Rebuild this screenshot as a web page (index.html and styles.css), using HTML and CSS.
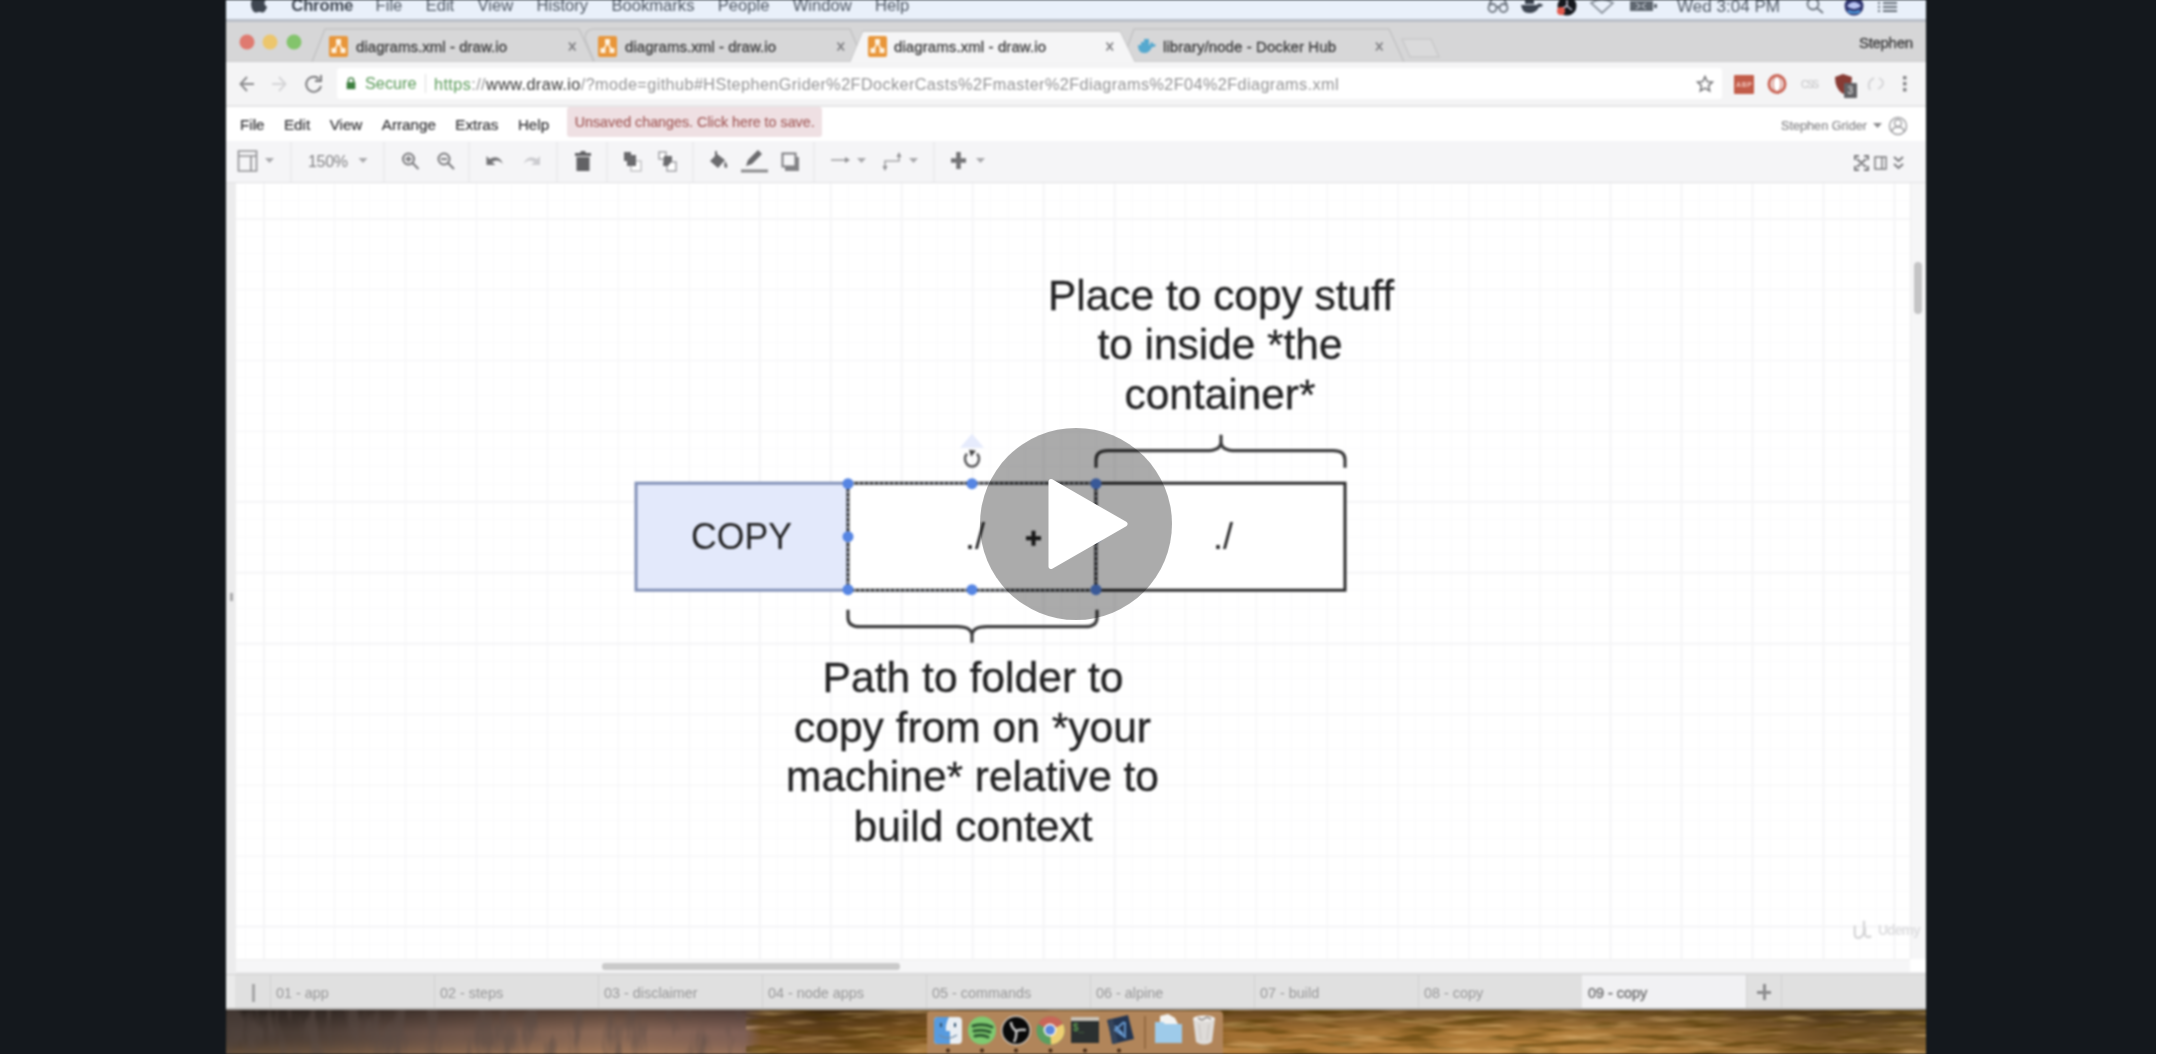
FILE: index.html
```html
<!DOCTYPE html>
<html lang="en">
<head>
<meta charset="utf-8">
<title>Lecture video</title>
<link rel="stylesheet" href="styles.css">
</head>
<body>
<main class="player">
<div class="video">
  <header class="macbar">
    <svg class="apple" width="18" height="22" viewBox="0 0 18 22"><path d="M12 1c0 2-1.500 4-3.500 4C8.300 3 10 1.200 12 1zM9 6.500c1-.3 2-1 3.500-1 1.500 0 3 .8 4 2-3 2-2.500 6 .6 7.300C16 18 14.500 20.500 13 20.500c-1.400 0-2-.8-3.700-.8-1.600 0-2.300.8-3.600.8C3 20.500 1 15.500 1 12c0-4 2.300-6.300 4.600-6.300 1.500 0 2.500.8 3.400.8z"/></svg>
    <b>Chrome</b><span>File</span><span>Edit</span><span>View</span><span>History</span><span>Bookmarks</span><span>People</span><span>Window</span><span>Help</span>
    <svg class="status" width="420" height="24" viewBox="1480 0 420 24">
      <g fill="none" stroke="#6b737d" stroke-width="1.800"><circle cx="1492.500" cy="8" r="4"/><circle cx="1503.500" cy="8" r="4"/><path d="M1489 5l3-6M1507 5l-3-6M1496 7h4"/></g>
      <path fill="#3c4450" d="M1521 5h16c1-2 3-2 6 0-1 2-3 2-4 2-2 4-5 6-10 6-5 0-7-3-8-8zM1525 0h9v4h-9z"/>
      <circle cx="1567" cy="6" r="9.500" fill="#15181d"/><path d="M1567 6v-6M1567 6l5 4M1567 6l-6 3" stroke="#ccd" stroke-width="1.500"/><circle cx="1561" cy="11" r="4" fill="#e25a4d"/>
      <path d="M1591 3q11-7 22 0l-11 10z" fill="none" stroke="#8a929c" stroke-width="1.800"/>
      <path d="M1630 1h23v10h-23zM1654 4h3v4h-3z" fill="#5f6770"/><path d="M1636 3l4 3-4 3M1646 3l-4 3 4 3" stroke="#dfe6ef" fill="none"/>
      <text x="1677" y="11.500" textLength="103" font-size="17" fill="#525b66">Wed 3:04 PM</text>
      <g fill="none" stroke="#6b737d" stroke-width="1.800"><circle cx="1813" cy="4" r="5.500"/><path d="M1817 8l6 5"/></g>
      <circle cx="1854" cy="6" r="9.500" fill="#30356f"/><path d="M1847 6q7-8 14 0-7 6-14 0z" fill="#b9c4f2"/><path d="M1848 11q6 3 12 0" stroke="#4ea4e8" stroke-width="2" fill="none"/>
      <path d="M1878 3h2m3 0h14M1878 7h2m3 0h14M1878 11h2m3 0h14" stroke="#646c76" stroke-width="2"/>
    </svg>
  </header>

  <div class="tabs">
    <svg class="tabshapes" width="1700" height="43" viewBox="226 19 1700 43">
      <circle cx="247" cy="42" r="7.500" fill="#df7a70"/><circle cx="270" cy="42" r="7.500" fill="#ecc66c"/><circle cx="294" cy="42" r="7.500" fill="#83c46c"/>
      <g fill="#d7d7d8" stroke="#c3c3c4" stroke-width="1.500"><path d="M312 62l13-33h254l15 33"/><path d="M594 61l-9-22q0-10 9-10h256l14 33"/><path d="M1122 62l12-33h255l15 33"/></g>
      <path d="M226 62h624l13-31h257l15 31h791" fill="none" stroke="#c3c3c4"/>
      <path d="M850 63l13-31h257l15 31z" fill="#f5f5f6"/>
      <path d="M1402 39h29l8 18h-29z" fill="#dadadb" stroke="#c9c9ca" stroke-width="1.500"/>
      <g id="fav"><rect x="329" y="36" width="19" height="21" rx="2" fill="#e8963a"/><path d="M338.500 43l-5 8M338.500 43l5 8" stroke="#fff4e2" stroke-width="1.500"/><path d="M336 39h5v5h-5zM331.500 48h5v5h-5zM340.500 48h5v5h-5z" fill="#fff4e2"/></g>
      <use href="#fav" x="269"/><use href="#fav" x="539"/>
      <path d="M1138 45h12c0-2 1-3 2-3 1 1 1 2 1 2 1 0 2 0 3 1-1 2-2 2-4 2-2 4-4 6-8 6-4 0-6-3-6-8zM1141 42h8v3h-8zM1144 39h5v3h-5z" fill="#56a9cf"/>
      <g stroke="#77777a" stroke-width="1.500"><path d="M569 42.500l6.500 8M575.500 42.500l-6.500 8M837.500 42.500l6.500 8M844 42.500l-6.500 8M1106.500 42.500l6.500 8M1113 42.500l-6.500 8M1376 42.500l6.500 8M1382.500 42.500l-6.500 8"/></g>
      <g font-size="15" fill="#3b3b3c" stroke="#3b3b3c" stroke-width=".3"><text x="356" y="51.500" textLength="151">diagrams.xml - draw.io</text><text x="625" y="51.500" textLength="151">diagrams.xml - draw.io</text><text x="894" y="51.500" textLength="152">diagrams.xml - draw.io</text><text x="1163" y="51.500" textLength="173">library/node - Docker Hub</text><text x="1859" y="48" textLength="54">Stephen</text></g>
    </svg>
  </div>

  <div class="addressbar">
    <svg class="nav" width="111" height="44" viewBox="226 62 111 44" fill="none" stroke-width="1.900"><path d="M254 84h-13m6-7l-6.500 7 6.500 7" stroke="#8a8a8c"/><path d="M272 84h13m-6-7l6.500 7-6.500 7" stroke="#d4d4d6"/><path d="M319 79a7.500 7.500 0 1 0 2 7M321 75v6h-6" stroke="#77777a"/></svg>
    <div class="field">
      <svg width="10" height="13" viewBox="0 0 10 15"><path d="M0 6h10v8H0z" fill="#3d7f3f"/><path d="M2 7V4q0-3 3-3t3 3v3" fill="none" stroke="#3d7f3f" stroke-width="1.700"/></svg>
      <span class="secure">Secure</span>
      <span class="url"><i>https</i>://<b>www.draw.io</b>/?mode=github#HStephenGrider%2FDockerCasts%2Fmaster%2Fdiagrams%2F04%2Fdiagrams.xml</span>
      <svg class="star" width="18" height="18" viewBox="0 0 18 18"><path d="M9 1.500l2.200 5 5.300.5-4 3.600 1.200 5.400L9 13.200 4.300 16l1.200-5.400-4-3.600 5.300-.5z" fill="none" stroke="#747477" stroke-width="1.500"/></svg>
    </div>
    <svg width="204" height="44" viewBox="1722 62 204 44"><rect x="1734" y="75" width="20" height="19" rx="1" fill="#c25c49"/><text x="1736" y="87" font-size="7" textLength="16" fill="#f1c4bb" font-weight="700">ABP</text><ellipse cx="1777" cy="84" rx="8" ry="8.500" fill="none" stroke="#ca6556" stroke-width="3"/><ellipse cx="1777" cy="84" rx="4" ry="7.500" fill="#fff" stroke="#ca6556"/><text x="1801" y="88" font-size="10" textLength="18" fill="#c0c0c2">CSS</text><path d="M1835 77l8-3 9 3q0 12-9 17-8-5-8-17z" fill="#873b34"/><rect x="1844" y="83" width="13" height="15" rx="1" fill="#626265"/><text x="1847.500" y="94" font-size="10" fill="#eee">3</text><path d="M1874 78q-8 4-4 12M1879 78q7 4 2 9l-3 2" fill="none" stroke="#d6d6d8" stroke-width="2"/><path d="M1903 76h3.500v3.500h-3.500zM1903 82h3.500v3.500h-3.500zM1903 88h3.500v3.500h-3.500z" fill="#858588"/></svg>
  </div>

  <div class="menubar"><span>File</span><span>Edit</span><span>View</span><span>Arrange</span><span>Extras</span><span>Help</span><div class="unsaved">Unsaved changes. Click here to save.</div><div class="user"><span>Stephen Grider</span><svg width="36" height="22" viewBox="1872 115 36 22"><path d="M1873 123h9l-4.500 5z" fill="#8a8a8c"/><g fill="none" stroke="#a0a0a3" stroke-width="1.500"><circle cx="1898" cy="126" r="8.500"/><circle cx="1898" cy="123" r="3.500"/><path d="M1892 132q0-5 6-5t6 5"/></g></svg></div></div>

  <div class="toolbar">
    <svg width="1700" height="41" viewBox="226 141 1700 41">
      <path d="M291 142v40M384 142v40M469 142v40M557 142v40M607 142v40M693 142v40M814 142v40M934 142v40" stroke="#e9e9ec" stroke-width="1.500"/>
      <g fill="#a8a8ab"><path d="M265 158h9l-4.500 5zM358.500 158h9l-4.500 5zM857 158h9l-4.500 5zM909 158h9l-4.500 5zM976 158h9l-4.500 5z"/></g>
      <g fill="none" stroke="#919194" stroke-width="1.700"><path d="M238.500 151h18v20h-18zM238.500 156h18M251 156v15"/></g>
      <text x="308" y="166.500" font-size="16" textLength="40" fill="#808083">150%</text>
      <g fill="none" stroke="#7b7b7e" stroke-width="2"><circle cx="408.500" cy="159" r="5.500"/><path d="M412.500 163l6 6M408.500 156v6M405.500 159h6"/><circle cx="444" cy="159" r="5.500"/><path d="M448 163l6 6M441 159h6"/></g>
      <path d="M486.500 156v9h9l-3.500-3q6-4 11 2-4-10-13.500-5z" fill="#747477"/><path d="M540 156v9h-9l3.500-3q-6-4-11 2 4-10 13.500-5z" fill="#ccccd0"/>
      <path d="M575 153h5l1-2h4l1 2h5v3h-16zM576.500 157h13v14h-13z" fill="#626265"/>
      <g><path d="M631 161h10v10h-10z" fill="#fff" stroke="#c2c2c5" stroke-width="1.500"/><path d="M624 152h7v3h5v11h-9v-5h-3z" fill="#6b6b6e"/><path d="M659 152h7v7h-7zM667 162h9v9h-9z" fill="#fff" stroke="#a2a2a6" stroke-width="1.500"/><path d="M664 156h8v5l-4 5h-5z" fill="#6b6b6e"/></g>
      <path d="M710 161l7-7 8 6-7 8zM715 151h2v7h-2zM725 161q4 6 1 7-3 0-1-7z" fill="#6b6b6e"/>
      <path d="M746 166l2-6 10-10 4 4-10 10z" fill="#6b6b6e"/><path d="M741 171h27" stroke="#8a8a8d" stroke-width="3"/>
      <path d="M785 157h14v14h-14z" fill="#858588"/><path d="M782.500 153.500h13v13h-13z" fill="#f5f5f7" stroke="#7e7e81" stroke-width="2"/>
      <g fill="none" stroke="#a6a6a9" stroke-width="1.700"><path d="M831 160h17"/><path d="M885 169v-8h14v-7"/></g><path d="M845 157l5 3-5 3zM882.500 166h5l-2.500 5zM896.500 157h5l-2.500-5z" fill="#8f8f92"/>
      <path d="M951 160.500h15M958.500 152v17" stroke="#737376" stroke-width="4.500"/>
      <g fill="none" stroke="#7b7b7e" stroke-width="2"><path d="M1855 160v-4h4M1864 156h4v4M1868 166v4h-4M1859 170h-4v-4M1857 159l9 8M1866 159l-9 8"/><path d="M1875 157h11v12h-11zM1882 157v12" stroke-width="1.500"/><path d="M1894 157l4.500 4 4.500-4M1894 164l4.500 4 4.500-4"/></g>
    </svg>
  </div>

  <section class="editor">
    <div class="rail"><i></i></div>
    <div class="canvas">
      <svg width="1674" height="776" viewBox="236 182.300 1674 776">
        <rect x="636" y="482.500" width="212" height="107" fill="#e3e9fb" stroke="#8392b8" stroke-width="3"/>
        <rect x="848" y="482.500" width="248" height="107" fill="#fff" stroke="#333" stroke-width="3"/>
        <rect x="1096" y="482.500" width="249" height="107" fill="#fff" stroke="#2c2c2d" stroke-width="3"/>
        <rect x="848" y="482.500" width="248" height="107" fill="none" stroke="#9da5b5" stroke-width="2" stroke-dasharray="2 3"/>
        <g fill="none" stroke="#3d3d3e" stroke-width="3.200"><path d="M1096 467v-8q0-9 12-9h98q15 0 15-9v-7 7q0 9 15 9h97q12 0 12 9v8"/><path d="M848 609v8q0 9 12 9h97q15 0 15 9v7-7q0-9 15-9h98q12 0 12-9v-8"/></g>
        <path d="M972 433l12 14h-24z" fill="#e6ebfc"/>
        <path d="M967 453a7 7.500 0 1 0 10 0" fill="none" stroke="#59595b" stroke-width="2.500"/><path d="M969 449l7 1-5 6z" fill="#444"/>
        <g fill="#5685e3"><circle cx="848" cy="483" r="5.500"/><circle cx="972" cy="483" r="5.500"/><circle cx="1096" cy="483" r="5.500"/><circle cx="848" cy="536" r="5.500"/><circle cx="1096" cy="536" r="5.500"/><circle cx="848" cy="589" r="5.500"/><circle cx="972" cy="589" r="5.500"/><circle cx="1096" cy="589" r="5.500"/></g>
        <path d="M1026 537.500h15M1033.500 530v15" stroke="#222" stroke-width="4"/>
        <g fill="#222223" text-anchor="middle" font-size="36" lengthAdjust="spacingAndGlyphs"><text x="741.500" y="548" textLength="101" lengthAdjust="spacingAndGlyphs">COPY</text><text x="975" y="548">./</text><text x="1223" y="548">./</text></g>
        <g fill="#222223" stroke="#222223" stroke-width=".3" text-anchor="middle" font-size="42.300"><text x="1221" y="309" textLength="346" lengthAdjust="spacingAndGlyphs">Place to copy stuff</text><text x="1220" y="358.500" textLength="245" lengthAdjust="spacingAndGlyphs">to inside *the</text><text x="1220" y="408" textLength="191" lengthAdjust="spacingAndGlyphs">container*</text><text x="973" y="691.300" textLength="301" lengthAdjust="spacingAndGlyphs">Path to folder to</text><text x="972.500" y="741" textLength="357" lengthAdjust="spacingAndGlyphs">copy from on *your</text><text x="972.500" y="790.500" textLength="373" lengthAdjust="spacingAndGlyphs">machine* relative to</text><text x="973" y="840" textLength="239" lengthAdjust="spacingAndGlyphs">build context</text></g>
      </svg>
    </div>
    <div class="vscroll"><i></i></div>
    <div class="hscroll"><i></i></div>
    <div class="corner"></div>
    <div class="watermark"><svg width="24" height="26" viewBox="0 0 26 26"><path d="M3 8v9q0 6 6 4 4-2 4-8V3M14 10v7q0 5 7 3" fill="none" stroke="#d6d6d8" stroke-width="2.500"/></svg><span>Udemy</span></div>
  </section>

  <nav class="pages"><div class="grip"><i></i></div><span>01 - app</span><span>02 - steps</span><span>03 - disclaimer</span><span>04 - node apps</span><span>05 - commands</span><span>06 - alpine</span><span>07 - build</span><span>08 - copy</span><span class="active">09 - copy</span><div class="add"></div></nav>

  <footer class="desktop">
    <svg class="wall" width="1700" height="45" viewBox="0 0 1700 45" preserveAspectRatio="none">
      <defs>
        <linearGradient id="wood"><stop offset="0" stop-color="#463a33"/><stop offset=".06" stop-color="#54443c"/><stop offset=".12" stop-color="#70574c"/><stop offset=".22" stop-color="#94705c"/><stop offset=".305" stop-color="#86655b"/><stop offset=".315" stop-color="#80582c"/><stop offset=".35" stop-color="#6a471d"/><stop offset=".41" stop-color="#8f6026"/><stop offset=".6" stop-color="#ab7635"/><stop offset=".78" stop-color="#bd8740"/><stop offset=".88" stop-color="#9d7035"/><stop offset=".94" stop-color="#755327"/><stop offset="1" stop-color="#7d5d2e"/></linearGradient>
        <linearGradient id="shade" x2="0" y2="1"><stop offset="0" stop-color="#000" stop-opacity=".42"/><stop offset=".5" stop-color="#000" stop-opacity=".05"/><stop offset="1" stop-color="#ffb65a" stop-opacity=".2"/></linearGradient>
        <filter id="grain" x="0" y="0" width="1" height="1"><feTurbulence type="fractalNoise" baseFrequency=".018 .16" numOctaves="3" seed="8"/><feColorMatrix values="0 0 0 0 .08  0 0 0 0 .04  0 0 0 0 0  3.800 0 0 0 -1.750"/></filter>
        <filter id="glint" x="0" y="0" width="1" height="1"><feTurbulence type="fractalNoise" baseFrequency=".018 .16" numOctaves="3" seed="21"/><feColorMatrix values="0 0 0 0 .9  0 0 0 0 .62  0 0 0 0 .28  3 0 0 0 -1.500"/></filter>
        <filter id="bark" x="0" y="0" width="1" height="1"><feTurbulence type="fractalNoise" baseFrequency=".06 .02" numOctaves="3" seed="5"/><feColorMatrix values="0 0 0 0 .1  0 0 0 0 .07  0 0 0 0 .06  4 0 0 0 -1.900"/></filter>
      </defs>
      <rect width="1700" height="45" fill="url(#wood)"/><rect width="1700" height="45" fill="url(#shade)"/>
      <rect width="525" height="45" filter="url(#bark)" opacity=".5"/>
      <rect x="520" width="1180" height="45" filter="url(#grain)" opacity=".55"/><rect x="520" width="1180" height="45" filter="url(#glint)" opacity=".4"/>
    </svg>
    <svg class="dock" width="296" height="45" viewBox="927 1009 296 45">
      <path d="M927 1054v-40q0-4 4-4h288q4 0 4 4v40z" fill="#b1855a"/>
      <rect x="934" y="1016" width="28" height="27" rx="4" fill="#e9eef3"/><path d="M938 1016h11q-4 8-3 14h4v13h-12q-4 0-4-4v-19q0-4 4-4z" fill="#579bdf"/><path d="M941 1022v4M955 1022v4" stroke="#31536f" stroke-width="2"/><path d="M939 1034q9 6 18 0" stroke="#6f8ca6" stroke-width="1.500" fill="none"/>
      <circle cx="982" cy="1029.500" r="14" fill="#7fc970"/><g fill="none" stroke="#2f5e33" stroke-width="3"><path d="M973 1025q10-3 19 1M974 1030q9-2 16 1M975 1035q7-2 13 1" stroke-linecap="round"/></g>
      <circle cx="1016" cy="1029.500" r="15" fill="#c9c2ba"/><circle cx="1016" cy="1029.500" r="13.500" fill="#090909"/><path d="M1016 1030q-5-4-5-9M1016 1030q5-2 10-1M1016 1030q1 6-2 11" fill="none" stroke="#c4c4c4" stroke-width="2.500"/>
      <circle cx="1050.500" cy="1029.500" r="14" fill="#5b9f60"/><path d="M1038 1023a14 14 0 0 1 25 0l-12 7z" fill="#c96658"/><path d="M1063 1023a14 14 0 0 1-12 20.500l-1-14z" fill="#edcf72"/><circle cx="1050" cy="1029" r="6.500" fill="#f3eee9"/><circle cx="1050" cy="1029" r="4.800" fill="#5b87dc"/>
      <path d="M1071 1017h28v25h-28z" fill="#2b3030"/><path d="M1071 1016h28v4h-28z" fill="#c8c2b8"/><text x="1073" y="1030" font-size="10" font-weight="700" fill="#5b9951">$_</text>
      <path d="M1107 1019l21-5 6 24-21 5z" fill="#243550"/><path d="M1108 1020l4 23 6-1-5-24z" fill="#35445a"/><path d="M1124 1021l-9 8 10 7v-15M1115 1025l8 8" fill="none" stroke="#6a9dd4" stroke-width="1.800"/>
      <path d="M1145 1015v33" stroke="#956b42" stroke-width="2"/>
      <path d="M1160 1024v-9l8-2 7 4 3 6z" fill="#f3f3f2"/><path d="M1155 1021h8l2 2h17v19h-27z" fill="#9ecbea"/>
      <path d="M1193 1017h22l-3 24q-8 5-16 0z" fill="#dedbd8"/><ellipse cx="1204" cy="1017.500" rx="11" ry="3" fill="#f1efed"/><path d="M1198 1017l4 2 5-3 4 2" stroke="#8d8986" stroke-width="1.500" fill="none"/><path d="M1199 1023l2 16M1209 1023l-2 16" stroke="#c7c2be"/>
      <g fill="#452a15"><circle cx="948" cy="1049.500" r="2"/><circle cx="982" cy="1049.500" r="2"/><circle cx="1016" cy="1049.500" r="2"/><circle cx="1050.500" cy="1049.500" r="2"/><circle cx="1085" cy="1049.500" r="2"/><circle cx="1119" cy="1049.500" r="2"/></g>
    </svg>
  </footer>
</div>
<button class="play" aria-label="Play"><svg width="192" height="192" viewBox="0 0 192 192"><path d="M71 53.500l74 42.500-74 42.500z" fill="#fff" stroke="#fff" stroke-width="5" stroke-linejoin="round"/></svg></button>
</main>
</body>
</html>
```
FILE: styles.css
```css
* { box-sizing: border-box; }
html { background: #fff; overflow: hidden; }
body { margin: 0; font-family: "Liberation Sans", Arial, sans-serif; }
svg { display: block; flex: none; }
i, b { font-style: normal; }

.player { position: relative; width: 2156px; height: 1054px; padding-left: 226px; background: #14181d; overflow: hidden; }
.video { display: flex; flex-direction: column; width: 1700px; height: 1054px; background: #fff; overflow: hidden; filter: blur(.85px); white-space: nowrap; }
.video > * { flex: none; }

.macbar { position: relative; display: flex; gap: 23.3px; height: 19px; padding-left: 24px; background: #e9f0fa; color: #4f5864; font-size: 16.6px; line-height: 20px; }
.macbar > span, .macbar > b { margin-top: -4px; }
.macbar b { width: 61px; letter-spacing: -.15px; color: #3f4752; }
.apple { margin: -8px 0 0 0; fill: #3e4650; }
.status { position: absolute; right: 26px; top: 0; }

.tabs { height: 43px; background: #d6d6d7; border-top: 3px solid #b9bec7; }
.tabshapes { margin-top: -3px; }

.addressbar { display: flex; align-items: center; height: 45px; background: #f4f4f5; border-bottom: 2px solid #e6e6e7; }
.field { display: flex; align-items: center; width: 1385px; height: 31px; padding: 0 8px 0 9px; background: #fff; border-radius: 3px; font-size: 16.3px; color: #929294; }
.secure { width: 61px; margin-left: 9px; border-right: 1px solid #ddd; color: #5a9a59; }
.url { margin: 1px 0 0 8px; font-size: 16.2px; letter-spacing: .43px; }
.url i { color: #5a9a59; }
.url b { font-weight: 400; color: #333; }
.star { margin-left: auto; }

.menubar { display: flex; align-items: center; gap: 19.5px; height: 34px; padding-left: 14px; background: #fff; color: #303033; font-size: 15.2px; -webkit-text-stroke: .2px; }
.unsaved { width: 255px; height: 30px; margin: -4px 0 0 -2px; padding-left: 8px; border-radius: 3px; background: #efe0e3; color: #a5605f; font-size: 14.3px; line-height: 31px; }
.user { display: flex; align-items: center; gap: 5px; margin: 4px 18px 0 auto; color: #87878a; font-size: 12.7px; }

.toolbar { height: 42px; background: #f5f5f7; border-bottom: 1px solid #e2e2e4; }

.editor { position: relative; display: grid; grid-template-columns: 10px 1674px 16px; grid-template-rows: 776px 15px; height: 791px; }
.rail { grid-row: 1 / 3; display: flex; align-items: center; justify-content: center; background: #ececed; }
.rail i { width: 3px; height: 8px; margin-top: 37px; background: #a8a8aa; }
.canvas {
  background:
    repeating-linear-gradient(90deg, #f5f5f7 0 1.5px, transparent 1.5px 70.9px) 27px 0,
    repeating-linear-gradient(#f5f5f7 0 1.5px, transparent 1.5px 70.8px) 0 35px,
    repeating-linear-gradient(90deg, #fafafb 0 1px, transparent 1px 17.725px) 27px 0,
    repeating-linear-gradient(#fafafb 0 1px, transparent 1px 17.7px) 0 35px,
    #fff;
  background-size: 1772.5px 100%, 100% 849.6px, 1772.5px 100%, 100% 849.6px;
}
.vscroll { padding: 79px 0 0 3px; background: #f6f6f7; border-left: 1px solid #ececed; }
.vscroll i { display: block; width: 8px; height: 52px; border-radius: 4px; background: #c4c4c5; }
.hscroll { padding: 3px 0 0 366px; background: #f6f6f7; border-top: 1px solid #eee; border-bottom: 2px solid #e7e7e8; }
.hscroll i { display: block; width: 298px; height: 7px; border-radius: 3px; background: #cacaca; }
.corner { background: #fff; border-bottom: 2px solid #e7e7e8; }
.watermark { position: absolute; left: 1626px; top: 734px; display: flex; align-items: center; gap: 2px; color: #dfdfe1; font-size: 14px; font-weight: 700; letter-spacing: -1px; }

.pages { display: flex; height: 36px; padding-left: 9px; background: linear-gradient(90deg, #eaeaea 9px, #e0e0e0 9px); border-top: 1px solid #d2d2d3; border-bottom: 2px solid #aaa8a6; color: #979798; font-size: 14.4px; line-height: 37px; }
.pages span { width: 164px; padding-left: 5px; border-left: 1.5px solid #d1d1d2; }
.pages .active { background: #f1f1f3; border-color: #f1f1f3; color: #7b7b7c; -webkit-text-stroke: .5px; }
.grip { width: 35px; padding: 9px 0 0 17px; }
.grip i { display: block; width: 3px; height: 18px; background: #a5a5a6; }
.add { width: 36px; border: solid #d1d1d2; border-width: 0 1px; background: linear-gradient(#8c8c8e, #8c8c8e) center 16px / 14px 3px no-repeat, linear-gradient(#8c8c8e, #8c8c8e) center 9px / 3px 16px no-repeat; }

.desktop { position: relative; height: 44px; background: #76502a; overflow: hidden; }
.dock { position: absolute; left: 701px; top: 0; }

.play { position: absolute; left: 980px; top: 428px; width: 192px; height: 192px; padding: 0; border: 0; border-radius: 50%; background: rgba(0, 0, 0, .33); }
```
